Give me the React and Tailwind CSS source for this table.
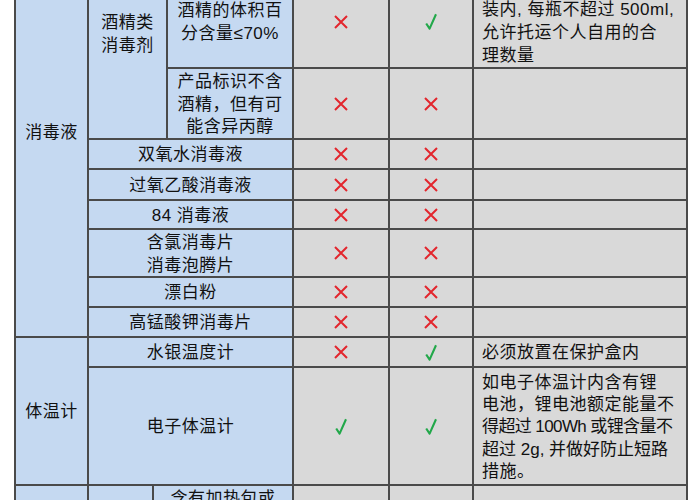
import React from "react";

const Cross = () => (
  <svg width="16" height="16" viewBox="0 0 16 16" aria-label="否">
    <path d="M2 2 L14 14 M14 2 L2 14" stroke="#e3262d" strokeWidth="2" fill="none" />
  </svg>
);

const Check = () => (
  <svg width="12" height="17" viewBox="0 0 12 17" aria-label="是">
    <path d="M1.2 10.5 L4.6 15.6 L11 1.2" stroke="#22a84a" strokeWidth="2.1" fill="none" strokeLinejoin="round" />
  </svg>
);

const Label = ({ className = "", children }) => (
  <div className={`flex items-center justify-center text-center pt-[3px] bg-[#c5d9f1] ${className}`}>
    <div className="whitespace-nowrap">{children}</div>
  </div>
);

const Mark = ({ className = "", children }) => (
  <div className={`flex items-center justify-center bg-[#d9d9d9] ${className}`}>{children}</div>
);

const Note = ({ className = "", children }) => (
  <div className={`flex items-center justify-start pl-2 pt-[3px] text-left bg-[#d9d9d9] ${className}`}>
    <div className="whitespace-nowrap">{children}</div>
  </div>
);

export default function App() {
  return (
    <div className="w-[700px] h-[500px] overflow-hidden bg-white">
      <div
        className="ml-[14px] -mt-[74px] w-[674px] grid gap-[2px] p-[2px] bg-[#4a4a4a] text-[17px] leading-[22.8px] tracking-[0.5px] text-[#111111] grid-cols-[71px_63px_12px_124px_94px_82px_212px] grid-rows-[46px_91px_69px_28px_29px_27px_46px_28px_28px_28px_116px_70px]"
        style={{ fontFamily: '"Liberation Sans", "Noto Sans CJK SC", sans-serif' }}
      >
        {/* 消毒液 group */}
        <Label className="col-start-1 row-start-1 row-span-9">消毒液</Label>
        <Label className="col-start-2 col-span-2 row-start-1 row-span-3">
          酒精类
          <br />
          消毒剂
        </Label>

        <Label className="col-start-4 row-start-1">
          酒精的体积百
          <br />
          分含量&gt;70%
        </Label>
        <Mark className="col-start-5 row-start-1"><Cross /></Mark>
        <Mark className="col-start-6 row-start-1"><Cross /></Mark>
        <Note className="col-start-7 row-start-1 row-span-2">
          可以随身携带，也
          <br />
          可托运，须放置在
          <br />
          容积适当的密封包
          <br />
          装内, 每瓶不超过 500ml,
          <br />
          允许托运个人自用的合
          <br />
          理数量
        </Note>

        <Label className="col-start-4 row-start-2">
          酒精的体积百
          <br />
          分含量≤70%
        </Label>
        <Mark className="col-start-5 row-start-2"><Cross /></Mark>
        <Mark className="col-start-6 row-start-2"><Check /></Mark>

        <Label className="col-start-4 row-start-3">
          产品标识不含
          <br />
          酒精，但有可
          <br />
          能含异丙醇
        </Label>
        <Mark className="col-start-5 row-start-3"><Cross /></Mark>
        <Mark className="col-start-6 row-start-3"><Cross /></Mark>
        <Note className="col-start-7 row-start-3" />

        <Label className="col-start-2 col-span-3 row-start-4">双氧水消毒液</Label>
        <Mark className="col-start-5 row-start-4"><Cross /></Mark>
        <Mark className="col-start-6 row-start-4"><Cross /></Mark>
        <Note className="col-start-7 row-start-4" />

        <Label className="col-start-2 col-span-3 row-start-5">过氧乙酸消毒液</Label>
        <Mark className="col-start-5 row-start-5"><Cross /></Mark>
        <Mark className="col-start-6 row-start-5"><Cross /></Mark>
        <Note className="col-start-7 row-start-5" />

        <Label className="col-start-2 col-span-3 row-start-6">84 消毒液</Label>
        <Mark className="col-start-5 row-start-6"><Cross /></Mark>
        <Mark className="col-start-6 row-start-6"><Cross /></Mark>
        <Note className="col-start-7 row-start-6" />

        <Label className="col-start-2 col-span-3 row-start-7">
          含氯消毒片
          <br />
          消毒泡腾片
        </Label>
        <Mark className="col-start-5 row-start-7"><Cross /></Mark>
        <Mark className="col-start-6 row-start-7"><Cross /></Mark>
        <Note className="col-start-7 row-start-7" />

        <Label className="col-start-2 col-span-3 row-start-8">漂白粉</Label>
        <Mark className="col-start-5 row-start-8"><Cross /></Mark>
        <Mark className="col-start-6 row-start-8"><Cross /></Mark>
        <Note className="col-start-7 row-start-8" />

        <Label className="col-start-2 col-span-3 row-start-9">高锰酸钾消毒片</Label>
        <Mark className="col-start-5 row-start-9"><Cross /></Mark>
        <Mark className="col-start-6 row-start-9"><Cross /></Mark>
        <Note className="col-start-7 row-start-9" />

        {/* 体温计 group */}
        <Label className="col-start-1 row-start-10 row-span-2">体温计</Label>
        <Label className="col-start-2 col-span-3 row-start-10">水银温度计</Label>
        <Mark className="col-start-5 row-start-10"><Cross /></Mark>
        <Mark className="col-start-6 row-start-10"><Check /></Mark>
        <Note className="col-start-7 row-start-10">必须放置在保护盒内</Note>

        <Label className="col-start-2 col-span-3 row-start-11">电子体温计</Label>
        <Mark className="col-start-5 row-start-11"><Check /></Mark>
        <Mark className="col-start-6 row-start-11"><Check /></Mark>
        <Note className="col-start-7 row-start-11">
          <div className="leading-[22.3px]">
            如电子体温计内含有锂
            <br />
            电池，锂电池额定能量不
            <br />
            <span className="tracking-[-0.6px]">得超过 100Wh 或锂含量不</span>
            <br />
            <span className="tracking-[0px]">超过 2g, 并做好防止短路</span>
            <br />
            措施。
          </div>
        </Note>

        {/* next group (cut off) */}
        <Label className="col-start-1 row-start-12" />
        <Label className="col-start-2 row-start-12" />
        <Label className="col-start-3 col-span-2 row-start-12">
          含有加热包或
          <br />
          发热包的自热
          <br />
          食品
        </Label>
        <Mark className="col-start-5 row-start-12" />
        <Mark className="col-start-6 row-start-12" />
        <Note className="col-start-7 row-start-12" />
      </div>
    </div>
  );
}
